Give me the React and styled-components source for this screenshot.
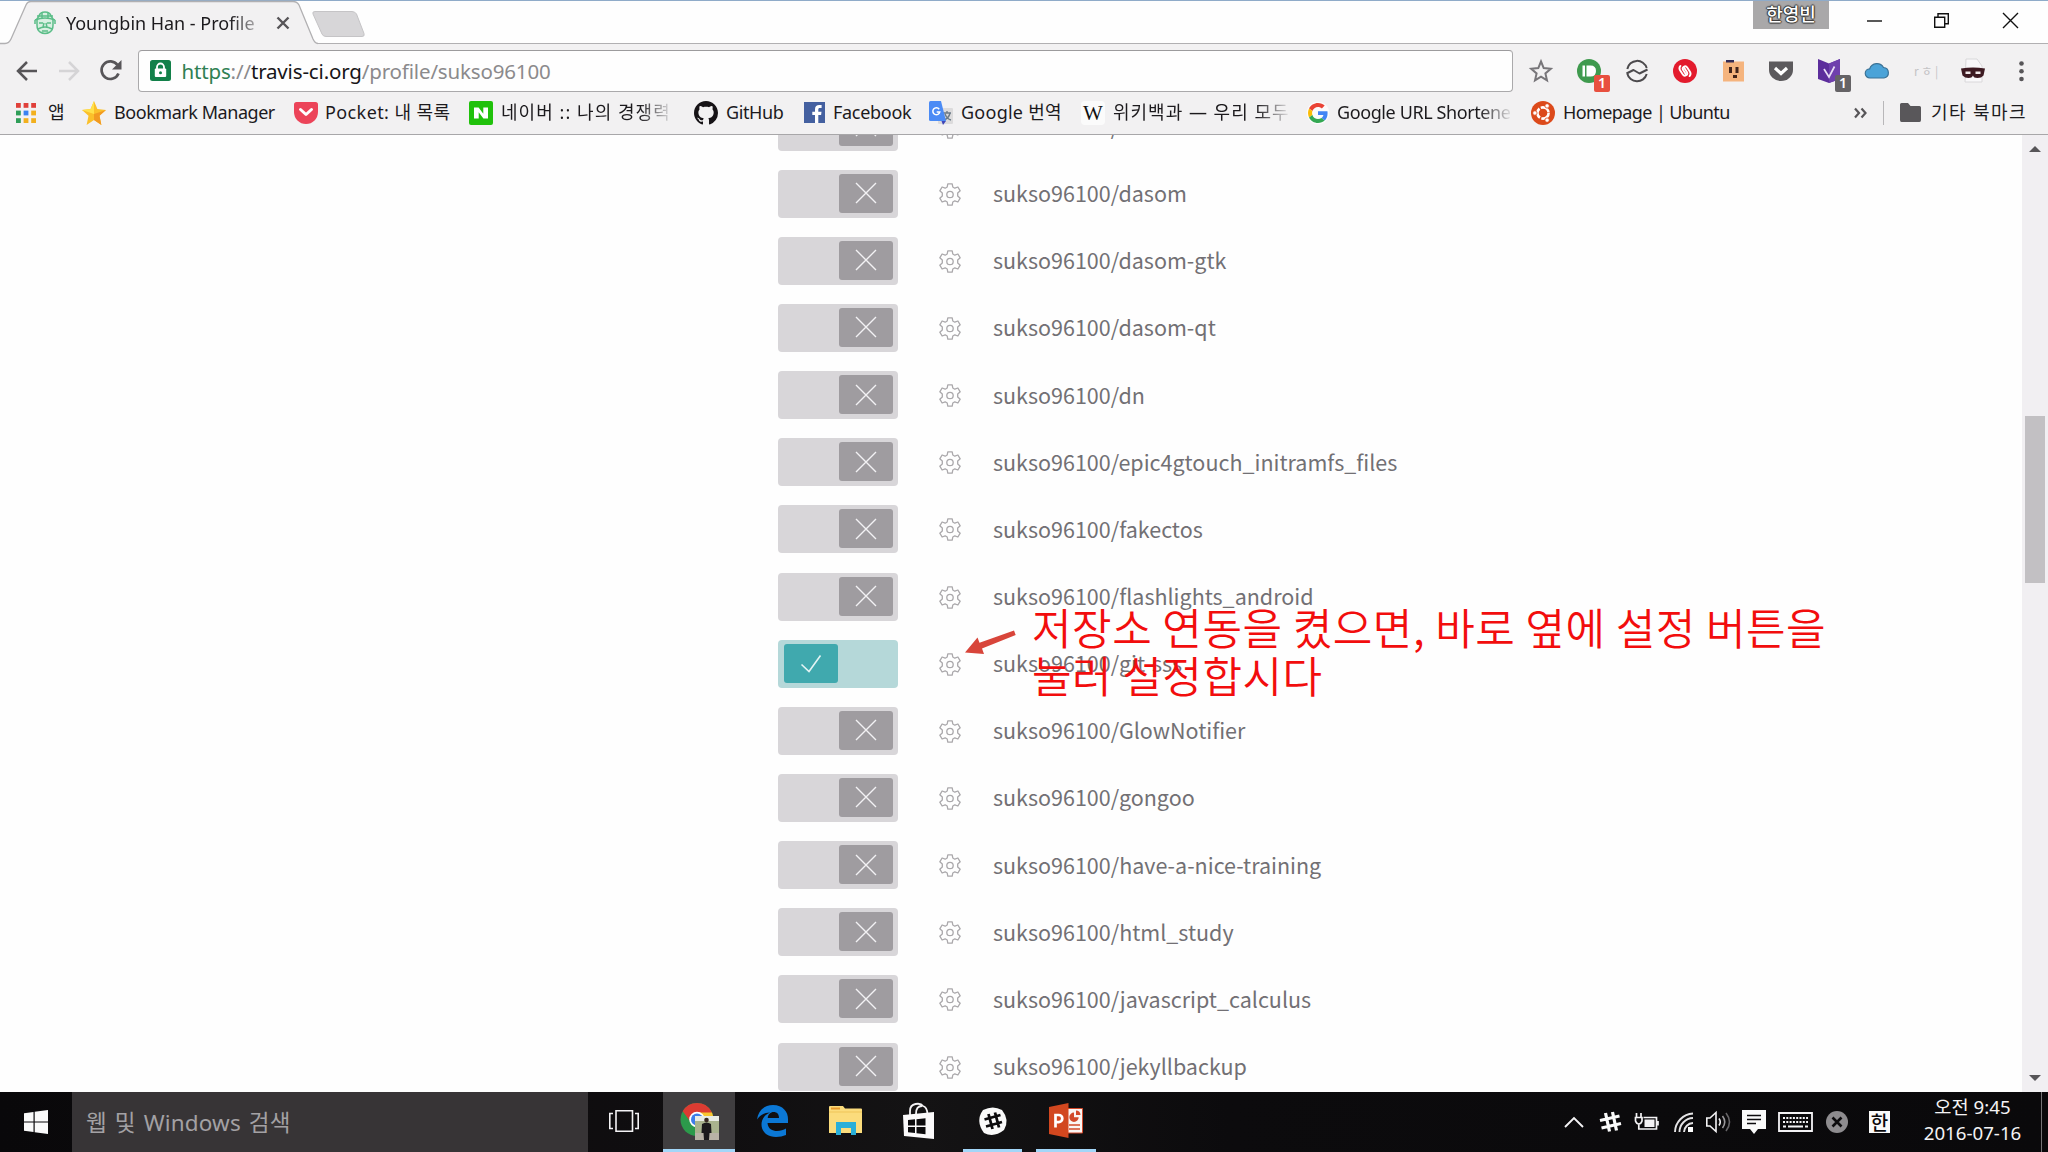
import React from "react";
import styled, { createGlobalStyle } from "styled-components";

const ui = `"Noto Sans", "Noto Sans CJK KR", sans-serif`;
const cjk = `"Noto Sans CJK KR", "Noto Sans", sans-serif`;

const Global = createGlobalStyle`
  * { box-sizing: border-box; }
  html, body { margin: 0; padding: 0; overflow: hidden; background: #fefefe; }
  svg { display: block; overflow: visible; flex: none; }
`;

const Screen = styled.div`
  width: 2048px;
  height: 1152px;
  display: flex;
  flex-direction: column;
  overflow: hidden;
  font-family: ${ui};
  color: #1c1a1d;
  background: #fefefe;
`;

/* ---------- title bar ---------- */
const TitleBar = styled.header`
  height: 44px;
  flex: none;
  display: flex;
  align-items: flex-start;
  border-top: 1px solid #8fabc9;
  background: linear-gradient(#b1b0b2, #b1b0b2) bottom / 100% 1px no-repeat, #fefefe;
`;
const Tab = styled.div`
  position: relative;
  width: 318px;
  height: 43px;
  padding-left: 34px;
  display: flex;
  align-items: center;
  flex: none;
`;
const TabShape = styled.svg`
  position: absolute;
  left: 0;
  top: 0;
`;
const Favicon = styled.div`
  position: relative;
  width: 22px;
  margin-right: 10px;
`;
const TabTitle = styled.div`
  position: relative;
  width: 195px;
  font-size: 18px;
  letter-spacing: -0.03px;
  line-height: 24px;
  white-space: nowrap;
  overflow: hidden;
  -webkit-mask-image: linear-gradient(90deg, #000 84%, rgba(0, 0, 0, 0.35) 97%);
`;
const TabClose = styled.div`
  position: relative;
  margin-left: 16px;
`;
const NewTab = styled.div`
  margin: 10px 0 0 -1px;
`;
const WindowArea = styled.div`
  margin-left: auto;
  display: flex;
  align-items: flex-start;
`;
const UserBadge = styled.div`
  width: 76px;
  height: 28px;
  background: #a9a8a9;
  color: #fff;
  font: 500 18px/25px ${cjk};
  text-align: center;
  text-shadow: 1px 0 1px #333, -1px 0 1px #333, 0 1px 1px #333, 0 -1px 1px #333;
  margin-right: 38px;
`;
const WinButton = styled.div`
  width: ${(p) => p.$w}px;
  padding-top: 12px;
`;

/* ---------- toolbar ---------- */
const Toolbar = styled.div`
  height: 50px;
  flex: none;
  display: flex;
  align-items: center;
  padding: 3px 0 0 16px;
  background: #f2f1f2;
`;
const NavIcon = styled.div`
  width: ${(p) => p.$w}px;
`;
const AddressBar = styled.div`
  width: 1375px;
  height: 42px;
  display: flex;
  align-items: center;
  padding-left: 11px;
  border: 1px solid #aaa9ab;
  border-top-color: #9c9b9d;
  border-radius: 4px;
  background: #fefefe;
`;
const Url = styled.div`
  margin-left: 10.5px;
  font-size: 20.5px;
  letter-spacing: -0.16px;
  line-height: 30px;
  white-space: nowrap;
  color: #8b8a8c;
`;
const Scheme = styled.span`
  color: #2f8053;
`;
const Host = styled.span`
  color: #171518;
`;
const Actions = styled.div`
  display: flex;
  align-items: center;
  padding-left: 16px;
`;
const Action = styled.div`
  position: relative;
  width: ${(p) => p.$w}px;
  height: 24px;
`;
const CountBadge = styled.span`
  position: absolute;
  left: 17px;
  top: 16px;
  width: 16px;
  height: 17px;
  border-radius: 2px;
  background: ${(p) => p.$bg};
  color: #fff;
  font: 600 14px/16px ${ui};
  text-align: center;
`;
const FaintText = styled.span`
  display: block;
  font: 12px/24px ${cjk};
  color: #c4c3c5;
`;

/* ---------- bookmarks ---------- */
const BookmarkBar = styled.nav`
  height: 41px;
  flex: none;
  display: flex;
  align-items: center;
  padding: 0 0 3px 16px;
  background: #f2f1f2;
  border-bottom: 1px solid #a8a7a9;
`;
const BookmarkItem = styled.div`
  width: ${(p) => p.$w}px;
  flex: none;
  display: flex;
  align-items: center;
`;
const BookmarkIcon = styled.div`
  width: ${(p) => p.$w}px;
  flex: none;
`;
const BookmarkLabel = styled.div`
  margin-bottom: 2px;
  font-size: 18px;
  line-height: 26px;
  letter-spacing: ${(p) => p.$ls}px;
  white-space: nowrap;
  ${(p) =>
    p.$clip &&
    `width: ${p.$clip}px; overflow: hidden;
     -webkit-mask-image: linear-gradient(90deg, #000 82%, rgba(0,0,0,0.1) 100%);`}
`;
const Divider = styled.div`
  width: 1px;
  height: 24px;
  margin-right: 16px;
  background: #b8b7b9;
`;

/* ---------- page ---------- */
const Page = styled.main`
  position: relative;
  height: 957px;
  flex: none;
  display: flex;
  justify-content: space-between;
  overflow: hidden;
  background: #fefefe;
`;
const RepoList = styled.ul`
  list-style: none;
  margin: -42px 0 0 778px;
  padding: 0;
`;
const RepoRow = styled.li`
  height: 67.15px;
  display: flex;
  align-items: center;
`;
const Switch = styled.div`
  width: 120px;
  height: 48px;
  display: flex;
  justify-content: ${(p) => (p.$on ? "flex-start" : "flex-end")};
  padding: ${(p) => (p.$on ? "4.5px 6px" : "4px 5.5px")};
  border-radius: 4px;
  background: ${(p) => (p.$on ? "#b5d8d9" : "#d8d6d9")};
`;
const Knob = styled.div`
  width: 54px;
  height: 39px;
  display: flex;
  align-items: center;
  justify-content: center;
  border-radius: 3px;
  background: ${(p) => (p.$on ? "#40a9ae" : "#9f9ca0")};
`;
const GearBox = styled.div`
  margin: 1px 32px 0 41px;
`;
const RepoName = styled.span`
  margin-bottom: 1px;
  font-family: ${cjk};
  font-size: 21.5px;
  line-height: 32px;
  white-space: nowrap;
  color: #727074;
`;
const Annotation = styled.p`
  position: absolute;
  left: 1032px;
  top: 467px;
  margin: 0;
  font: 350 43px/48px ${cjk};
  letter-spacing: 0.52px;
  color: #f20d0d;
  white-space: nowrap;
`;
const Arrow = styled.svg`
  position: absolute;
  left: 965px;
  top: 495px;
`;
const ScrollTrack = styled.div`
  width: 26px;
  height: 100%;
  display: flex;
  flex-direction: column;
  align-items: center;
  justify-content: space-between;
  padding: 11px 0;
  background: #f1eff2;
`;
const ScrollThumb = styled.div`
  width: 20px;
  height: 167px;
  margin-bottom: 228px;
  background: #c2c0c3;
`;

/* ---------- taskbar ---------- */
const Taskbar = styled.footer`
  height: 60px;
  flex: none;
  display: flex;
  background: linear-gradient(90deg, #09080a, #100e10 35%, #141314 45%, #0c0b0d 60%, #0a090b);
  color: #f4f3f5;
`;
const StartButton = styled.div`
  width: 72px;
  display: flex;
  align-items: center;
  padding-left: 24px;
`;
const SearchBox = styled.div`
  width: 516px;
  padding-left: 14px;
  background: #373436;
  color: #a3a1a4;
  font-size: 22.5px;
  letter-spacing: 0.15px;
  word-spacing: 2px;
  line-height: 61px;
  white-space: nowrap;
`;
const AppSlot = styled.div`
  width: ${(p) => p.$w}px;
  margin-left: ${(p) => p.$ml || 0}px;
  height: 60px;
  display: flex;
  align-items: center;
  justify-content: center;
  background: ${(p) => (p.$active ? "#403e40" : "transparent")};
  border-bottom: 3px solid ${(p) => (p.$open ? "#a3d6f8" : "transparent")};
`;
const Tray = styled.div`
  display: flex;
  align-items: center;
  margin-left: auto;
`;
const TrayIcon = styled.div`
  width: ${(p) => p.$w}px;
`;
const ImeBadge = styled.div`
  width: 21px;
  height: 22px;
  background: #fafafa;
  color: #0a090b;
  font: 500 19px/21px ${cjk};
  text-align: center;
`;
const Clock = styled.div`
  width: 151px;
  padding: 2px 0 0 14px;
  text-align: center;
  font-size: 18.7px;
  white-space: nowrap;
`;
const ClockLine = styled.div`
  height: 26px;
  line-height: 26px;
`;
const DesktopEdge = styled.div`
  width: 7px;
  height: 60px;
  border-left: 1px solid #757376;
`;

/* ---------- icons ---------- */
const Gear = () => (
  <svg width="22" height="23" viewBox="0 0 22 23" fill="none" stroke="#aaa8ab" strokeWidth="1.3" strokeLinejoin="round">
    <path d="M8.8 .8h4.4l.6 3.2 2 1.2 3.100-1.200 2.300 3.800-2.500 2.300v2.800l2.500 2.300-2.300 3.800-3.100-1.200-2 1.200-.6 3.200H8.800L8.200 19l-2-1.200L3.100 19 .8 15.200l2.500-2.300v-2.800L.8 7.800 3.100 4l3.100 1.200 2-1.200z" />
    <circle cx="11" cy="11.5" r="3.2" />
  </svg>
);
const Cross = () => (
  <svg width="20" height="20" viewBox="0 0 20 20" stroke="#f3f2f4" strokeWidth="1.4">
    <path d="M0 0L20 20M20 0L0 20" />
  </svg>
);
const Check = () => (
  <svg width="20" height="17" viewBox="0 0 20 17" stroke="#e4f4f4" strokeWidth="1.6" fill="none">
    <path d="M.5 9.500L8 16.500 19.500 .5" />
  </svg>
);
const TravisIcon = () => (
  <svg width="22" height="24" viewBox="0 0 22 24" fill="none" stroke="#5bbd88" strokeWidth="1.5">
    <path d="M5 5Q6 1 11 1t6 4l2 3v6q0 5-3 7-5 3-10 0-3-2-3-7V8z" fill="#d9f0e2" />
    <path d="M1 9q10-4 20 0M3 5h16M8 1v7M14 1v7M5 12h4M13 12h4M10 12l-1 4h4l-1-4M4 18q7-4 14 0M8 20h6M1 9v4M21 9v4" />
  </svg>
);
const UbuntuIcon = () => (
  <svg width="24" height="24" viewBox="0 0 24 24">
    <circle cx="12" cy="12" r="12" fill="#dc4a1b" />
    <circle cx="12" cy="12" r="5.600" fill="none" stroke="#fff" strokeWidth="2.600" strokeDasharray="10.300 1.430" />
    <g fill="#fff" stroke="#dc4a1b" strokeWidth=".8">
      <circle cx="3.900" cy="12" r="2.200" />
      <circle cx="16.100" cy="4.900" r="2.200" />
      <circle cx="16.100" cy="19.100" r="2.200" />
    </g>
  </svg>
);
const WikiW = styled.div`
  width: 24px;
  height: 24px;
  border-radius: 4px;
  background: #fbfbfb;
  font: 21px/24px "Liberation Serif", serif;
  color: #111;
  text-align: center;
`;
const GoogleG = () => (
  <svg width="20" height="20" viewBox="0 0 48 48">
    <circle cx="24" cy="24" r="27" fill="#fbfbfb" />
    <path fill="#EA4335" d="M24 9.500c3.540 0 6.710 1.220 9.210 3.600l6.850-6.850C35.900 2.380 30.470 0 24 0 14.620 0 6.510 5.380 2.560 13.220l7.980 6.190C12.430 13.720 17.740 9.500 24 9.500z" />
    <path fill="#4285F4" d="M46.980 24.550c0-1.570-.15-3.090-.38-4.550H24v9.020h12.940c-.58 2.960-2.260 5.480-4.780 7.180l7.730 6c4.510-4.180 7.090-10.360 7.090-17.650z" />
    <path fill="#FBBC05" d="M10.530 28.590c-.48-1.450-.76-2.990-.76-4.590s.27-3.140.76-4.590l-7.980-6.190C.92 16.460 0 20.120 0 24c0 3.880.92 7.540 2.560 10.780l7.970-6.190z" />
    <path fill="#34A853" d="M24 48c6.480 0 11.930-2.130 15.890-5.810l-7.730-6c-2.150 1.450-4.920 2.300-8.160 2.300-6.260 0-11.570-4.220-13.470-9.910l-7.980 6.190C6.510 42.620 14.620 48 24 48z" />
  </svg>
);
const AppsGrid = () => (
  <svg width="20" height="20" viewBox="0 0 20 20">
    {["#e0403a", "#e0403a", "#e0403a", "#2f9e58", "#3b82f0", "#f2b01e", "#2f9e58", "#f2b01e", "#f2b01e"].map((c, i) => (
      <rect key={i} x={(i % 3) * 7.6} y={Math.floor(i / 3) * 7.6} width="4.8" height="4.8" fill={c} />
    ))}
  </svg>
);
const StarIcon = () => (
  <svg width="24" height="24" viewBox="0 0 24 24">
    <path d="M12 0l3.400 8.100 8.600.8-6.500 5.800L19.400 24 12 19 4.600 24l1.900-9.300L0 8.900l8.600-.8z" fill="#fbc02a" />
    <path d="M12 0v13L0 8.900l8.600-.8z" fill="#ffe14a" />
    <path d="M12 13l12-4.100-6.500 5.800L19.400 24 12 19z" fill="#f29a22" />
  </svg>
);
const PocketRed = () => (
  <svg width="24" height="22" viewBox="0 0 24 22">
    <path d="M2.500 0h19Q24 0 24 2.500V10a12 12 0 0 1-24 0V2.500Q0 0 2.500 0z" fill="#ec4459" />
    <path d="M6.500 7.500l5.500 5 5.500-5" fill="none" stroke="#fff" strokeWidth="3" strokeLinecap="round" strokeLinejoin="round" />
  </svg>
);
const NaverIcon = () => (
  <svg width="24" height="24" viewBox="0 0 24 24">
    <rect width="24" height="24" rx="2" fill="#20c10b" />
    <path d="M5 6.500h4.600l4.700 6.300V6.500H19v11h-4.600l-4.700-6.300v6.300H5z" fill="#fff" />
  </svg>
);
const GithubIcon = () => (
  <svg width="24" height="24" viewBox="0 0 16 16" fill="#161316">
    <path d="M8 0C3.580 0 0 3.580 0 8c0 3.540 2.290 6.530 5.470 7.590.4.07.55-.17.55-.38 0-.19-.01-.82-.01-1.490-2.010.37-2.530-.49-2.690-.94-.09-.23-.48-.94-.82-1.130-.28-.15-.68-.52-.01-.53.63-.01 1.080.58 1.230.82.72 1.210 1.870.87 2.330.66.07-.52.28-.87.51-1.070-1.780-.2-3.640-.89-3.640-3.950 0-.87.31-1.590.82-2.150-.08-.2-.36-1.020.08-2.120 0 0 .67-.21 2.200.82.64-.18 1.320-.27 2-.27s1.360.09 2 .27c1.530-1.040 2.200-.82 2.200-.82.44 1.100.16 1.920.08 2.120.51.56.82 1.270.82 2.150 0 3.070-1.870 3.750-3.650 3.950.29.25.54.73.54 1.480 0 1.070-.01 1.930-.01 2.200 0 .21.15.46.55.38A8.010 8.010 0 0 0 16 8c0-4.420-3.580-8-8-8z" />
  </svg>
);
const FacebookIcon = () => (
  <svg width="21" height="21" viewBox="0 0 21 21">
    <rect width="21" height="21" fill="#4460a0" />
    <path d="M11 21v-8H8.300V9.800H11V7.300c0-2.800 1.700-4.200 4.200-4.200h2.400V6h-1.700c-1.300 0-1.600.6-1.600 1.600v2.200h3.200l-.4 3.200h-2.800v8z" fill="#fff" />
  </svg>
);
const TranslateIcon = () => (
  <svg width="24" height="24" viewBox="0 0 24 24">
    <rect x="9" y="7" width="15" height="16" rx="1" fill="#dcdbdc" />
    <path d="M14 12h8M18 10v2M16 13q2 5 6 6M21 12q-1 5-6 7" stroke="#6b7a86" strokeWidth="1.400" fill="none" />
    <path d="M1.500 0h10.500l5 20H1.500Q0 20 0 18.500v-17Q0 0 1.500 0z" fill="#4b8bf5" />
    <path d="M12.500 20H17l-3 4z" fill="#4046b8" />
    <path d="M10.200 8.200a3.500 3.500 0 1 0 .6 2.700H7.700" stroke="#fff" strokeWidth="1.500" fill="none" />
  </svg>
);
const FolderGrey = () => (
  <svg width="21" height="19" viewBox="0 0 21 19">
    <path d="M1.500 0h6.500l2.500 3h9q1.500 0 1.500 1.500v12.500q0 2-1.500 2h-18Q0 19 0 17V1.500Q0 0 1.500 0z" fill="#59575a" />
  </svg>
);

const bookmarks = [
  { icon: <AppsGrid />, text: "앱", w: 66, iw: 32, ls: 0 },
  { icon: <StarIcon />, text: "Bookmark Manager", w: 212, iw: 32, ls: -0.45 },
  { icon: <PocketRed />, text: "Pocket: 내 목록", w: 175, iw: 31, ls: 0.4 },
  { icon: <NaverIcon />, text: "네이버 :: 나의 경쟁력", w: 225, iw: 32, ls: 1.05, clip: 169 },
  { icon: <GithubIcon />, text: "GitHub", w: 110, iw: 32, ls: -0.4 },
  { icon: <FacebookIcon />, text: "Facebook", w: 125, iw: 29, ls: -0.3 },
  { icon: <TranslateIcon />, text: "Google 번역", w: 152, iw: 32, ls: 0.25 },
  { icon: <WikiW>W</WikiW>, text: "위키백과 — 우리 모두", w: 227, iw: 32, ls: 1, clip: 175 },
  { icon: <GoogleG />, text: "Google URL Shortener", w: 223, iw: 29, ls: -0.4, clip: 173 },
  { icon: <UbuntuIcon />, text: "Homepage | Ubuntu", w: 323, iw: 32, ls: -0.6 },
];

const repos = [
  "sukso96100/cron",
  "sukso96100/dasom",
  "sukso96100/dasom-gtk",
  "sukso96100/dasom-qt",
  "sukso96100/dn",
  "sukso96100/epic4gtouch_initramfs_files",
  "sukso96100/fakectos",
  "sukso96100/flashlights_android",
  "sukso96100/git-sss",
  "sukso96100/GlowNotifier",
  "sukso96100/gongoo",
  "sukso96100/have-a-nice-training",
  "sukso96100/html_study",
  "sukso96100/javascript_calculus",
  "sukso96100/jekyllbackup",
];
const enabledRepo = "sukso96100/git-sss";

function Repo({ name }) {
  const on = name === enabledRepo;
  return (
    <RepoRow>
      <Switch $on={on}>
        <Knob $on={on}>{on ? <Check /> : <Cross />}</Knob>
      </Switch>
      <GearBox><Gear /></GearBox>
      <RepoName>{name}</RepoName>
    </RepoRow>
  );
}

function BrowserTitle() {
  return (
    <TitleBar>
      <Tab>
        <TabShape width="318" height="43" viewBox="0 0 318 43">
          <path d="M0 42.500H5Q9 42.500 11 38L26 4Q27.500 .5 31 .5H293Q297 .5 299 4L313 38Q315 42.500 318 42.500V44H0z" fill="#f2f1f2" />
          <path d="M0 42.500H5Q9 42.500 11 38L26 4Q27.500 .5 31 .5H293Q297 .5 299 4L313 38Q315 42.500 318 42.500" fill="none" stroke="#b1b0b2" strokeWidth="1.300" />
        </TabShape>
        <Favicon><TravisIcon /></Favicon>
        <TabTitle>Youngbin Han - Profile</TabTitle>
        <TabClose>
          <svg width="12" height="12" viewBox="0 0 12 12" stroke="#575558" strokeWidth="2.400"><path d="M.5 .5l11 11M11.500 .5l-11 11" /></svg>
        </TabClose>
      </Tab>
      <NewTab>
        <svg width="50" height="26" viewBox="0 0 50 26">
          <path d="M-2 .5H35Q38 .5 39.500 3L47 22.500Q48 25.500 45 25.500H9Q6 25.500 5 23L-4 3Q-5 .5-2 .5z" fill="#d7d6d8" stroke="#c5c4c6" />
        </svg>
      </NewTab>
      <WindowArea>
        <UserBadge>한영빈</UserBadge>
        <WinButton $w={67}>
          <svg width="15" height="15" viewBox="0 0 15 15" stroke="#111" strokeWidth="1.400"><path d="M0 8h15" /></svg>
        </WinButton>
        <WinButton $w={69}>
          <svg width="15" height="15" viewBox="0 0 15 15" stroke="#111" strokeWidth="1.400" fill="none"><path d="M.7 4.200h10v10H.7zM4 4V.7h10.300v10H11" /></svg>
        </WinButton>
        <WinButton $w={45}>
          <svg width="15" height="15" viewBox="0 0 15 15" stroke="#111" strokeWidth="1.400"><path d="M0 0l15 15M15 0L0 15" /></svg>
        </WinButton>
      </WindowArea>
    </TitleBar>
  );
}

function BrowserToolbar() {
  return (
    <Toolbar>
      <NavIcon $w={43}>
        <svg width="21" height="20" viewBox="0 0 21 20" fill="none" stroke="#575558" strokeWidth="2.500"><path d="M21 10H2M11 1L2 10l9 9" /></svg>
      </NavIcon>
      <NavIcon $w={41}>
        <svg width="21" height="20" viewBox="0 0 21 20" fill="none" stroke="#d5d4d6" strokeWidth="2.500"><path d="M0 10h19M10 1l9 9-9 9" /></svg>
      </NavIcon>
      <NavIcon $w={38}>
        <svg width="22" height="21" viewBox="0 0 22 21" fill="none" stroke="#575558" strokeWidth="2.700"><path d="M18.500 13.500A8.800 8.800 0 1 1 17.500 5" /><path d="M21.500 0v9.500H12z" fill="#575558" stroke="none" /></svg>
      </NavIcon>
      <AddressBar>
        <svg width="21" height="21" viewBox="0 0 21 21">
          <rect width="21" height="21" rx="2.500" fill="#128049" />
          <path d="M7 9V7a3.500 3.500 0 0 1 7 0v2" fill="none" stroke="#fff" strokeWidth="1.800" />
          <rect x="4.800" y="8.500" width="11.400" height="8.500" rx="1" fill="#fff" />
          <circle cx="10.500" cy="12.700" r="1.500" fill="#128049" />
        </svg>
        <Url><Scheme>https</Scheme>://<Host>travis-ci.org</Host>/profile/sukso96100</Url>
      </AddressBar>
      <Actions>
        <Action $w={48}>
          <svg width="24" height="24" viewBox="0 0 24 24"><path d="M12 2.500l2.700 6.600 7.100.6-5.400 4.700 1.600 7L12 17.700l-6 3.700 1.600-7L2.200 9.700l7.100-.6z" fill="none" stroke="#78767a" strokeWidth="2" /></svg>
        </Action>
        <Action $w={49}>
          <svg width="24" height="24" viewBox="0 0 24 24"><circle cx="12" cy="12" r="12" fill="#3f9a4e" /><path d="M5.500 6.500H8v11H5.500zM9.500 6.500h4q5.500 0 5.500 5.500t-5.500 5.500h-4z" fill="#fff" /></svg>
          <CountBadge $bg="#e8503f">1</CountBadge>
        </Action>
        <Action $w={47}>
          <svg width="22" height="24" viewBox="0 0 22 24" fill="none" stroke="#4c4a4d" strokeWidth="2"><path d="M1.300 10A10 10 0 0 1 20.700 9M1.300 14.500A10 10 0 0 0 20.700 15M.5 14.500L7.500 11 13.500 14.500 21.500 10.500" strokeLinejoin="round" /></svg>
        </Action>
        <Action $w={50}>
          <svg width="24" height="24" viewBox="0 0 24 24"><circle cx="12" cy="12" r="12" fill="#e31b2d" /><g transform="rotate(12 12 12)" fill="none" stroke="#fff" strokeWidth="1.900" strokeLinecap="round"><path d="M10.300 8.800L14 12.500a2.400 2.400 0 0 1-3.400 3.400L7 12.300a3.600 3.600 0 0 1-.5-4.300" /><path d="M13.700 15.200L10 11.500a2.400 2.400 0 0 1 3.400-3.400L17 11.700a3.600 3.600 0 0 1 .5 4.300" /></g></svg>
        </Action>
        <Action $w={46}>
          <svg width="21" height="24" viewBox="0 0 21 24"><rect y="2.500" width="21" height="20" fill="#f5b47e" /><path d="M3 1h8v2.500H3z" fill="#332c55" /><path d="M6 8h3v6H6zM12.500 8h3v6h-3zM10 16h4v3h-4z" fill="#42251c" /></svg>
        </Action>
        <Action $w={49}>
          <svg width="24" height="24" viewBox="0 0 24 24"><path d="M0 2.500h24V11a12 11 0 0 1-24 0z" fill="#5c5a5d" /><path d="M6 9l6 5.500L18 9" fill="none" stroke="#fff" strokeWidth="3.200" /></svg>
        </Action>
        <Action $w={47}>
          <svg width="22" height="24" viewBox="0 0 22 24"><path d="M0 0l11 4.500L22 0v20l-11 4L0 20z" fill="#5c2d9c" /><path d="M11 4.500L22 0v20l-11 4z" fill="#6f40ad" /><path d="M6 10l5 8 5.500-10.500" fill="none" stroke="#e8def5" strokeWidth="1.700" /></svg>
          <CountBadge $bg="#656366">1</CountBadge>
        </Action>
        <Action $w={49}>
          <svg width="24" height="24" viewBox="0 0 24 24"><path d="M5 19a4.600 4.600 0 0 1-.3-9.200A7.600 7.600 0 0 1 18.500 8.500 5.300 5.300 0 0 1 19 19z" fill="#4ba3d8" stroke="#3a7296" strokeWidth="1.200" /></svg>
        </Action>
        <Action $w={47}><FaintText>r ㅎ |</FaintText></Action>
        <Action $w={58}>
          <svg width="24" height="24" viewBox="0 0 24 24"><path d="M5 0h11l5 7v16H4z" fill="#f9f8fa" stroke="#d9d8da" /><path d="M0 9.500q12-2 24 0l-1.500 7q-2 2.500-6 2.500t-4.500-2.500q-1 2.500-4.500 2.500t-6-2.500z" fill="#3d1a22" /><path d="M4.500 12.500h5v2.500h-5zM14.500 12.500h5v2.500h-5z" fill="#f2e9ea" /></svg>
        </Action>
        <Action $w={6}>
          <svg width="5" height="24" viewBox="0 0 5 24" fill="#575558"><circle cx="2.500" cy="4.500" r="2.300" /><circle cx="2.500" cy="12.300" r="2.300" /><circle cx="2.500" cy="20" r="2.300" /></svg>
        </Action>
      </Actions>
    </Toolbar>
  );
}

function Bookmarks() {
  return (
    <BookmarkBar>
      {bookmarks.map((b) => (
        <BookmarkItem key={b.text} $w={b.w}>
          <BookmarkIcon $w={b.iw}>{b.icon}</BookmarkIcon>
          <BookmarkLabel $ls={b.ls} $clip={b.clip}>{b.text}</BookmarkLabel>
        </BookmarkItem>
      ))}
      <BookmarkItem $w={29}>
        <svg width="13" height="10" viewBox="0 0 13 10" fill="none" stroke="#575558" strokeWidth="2.200"><path d="M1 .5L5 5 1 9.500M7.500 .5l4 4.500-4 4.500" /></svg>
      </BookmarkItem>
      <Divider />
      <BookmarkItem $w={140}>
        <BookmarkIcon $w={31}><FolderGrey /></BookmarkIcon>
        <BookmarkLabel $ls={1.4}>기타 북마크</BookmarkLabel>
      </BookmarkItem>
    </BookmarkBar>
  );
}

function WindowsTaskbar() {
  return (
    <Taskbar>
      <StartButton>
        <svg width="24" height="24" viewBox="0 0 24 24" fill="#fafafa"><path d="M0 3.300l9.500-1.400v9.500H0zM10.700 1.700L24 0v11.400H10.700zM0 12.600h9.500v9.500L0 20.700zM10.700 12.600H24V24l-13.300-1.800z" /></svg>
      </StartButton>
      <SearchBox>웹 및 Windows 검색</SearchBox>
      <AppSlot $w={72}>
        <svg width="30" height="22" viewBox="0 0 30 22" fill="none" stroke="#f4f3f5" strokeWidth="1.600"><path d="M7 .8h16.500v20.400H7zM4 3.500H.8v15H4M26 3.500h3.200v15H26" /></svg>
      </AppSlot>
      <AppSlot $w={72} $ml={3} $active $open>
        <svg width="36" height="38" viewBox="0 0 36 38">
          <circle cx="16" cy="17.500" r="16.500" fill="#2c9a4b" />
          <path d="M1.700 9.200A16.500 16.500 0 0 1 30.300 9.200L31 11.500H16l-7.500 7z" fill="#dc3b32" />
          <path d="M16 10.500h15a16.500 16.500 0 0 1-13 23l5-12z" fill="#f7c531" />
          <circle cx="16" cy="17.500" r="7.800" fill="#fff" /><circle cx="16" cy="17.500" r="6" fill="#3e7de8" />
          <rect x="14" y="14" width="24" height="24" fill="#a9b38e" /><path d="M14 14h24v5H14z" fill="#e8ece6" /><path d="M14 31h24v7H14z" fill="#b9b3a6" />
          <circle cx="25.500" cy="18" r="2.300" fill="#3a2a22" /><path d="M21 22q4.500-3 9 0l.5 9h-2l-.5 7h-5l-.5-7h-2z" fill="#1c1a1c" />
        </svg>
      </AppSlot>
      <AppSlot $w={74}>
        <svg width="31" height="32" viewBox="0 0 31 32"><path d="M0 14.500C1.500 5 8 0 16 0c10 0 15 7 15 14v4H10.500c.5 6 5 8 9.500 8 3.500 0 6.500-1 9-2.500v6.500q-4.500 2-10 2C10 32 4.500 26.500 4.500 19.500 4.500 14 8 9.500 13 7.500 8 7.500 3 10 0 14.500zM10.700 13H22c0-4-2-6-5.300-6s-5.600 2.500-6 6z" fill="#0b78d6" /></svg>
      </AppSlot>
      <AppSlot $w={73}>
        <svg width="33" height="29" viewBox="0 0 33 29"><path d="M0 1q0-1 1-1h13l2 2.500h16q1 0 1 1V27H0z" fill="#fbdc7c" /><path d="M0 6h33" stroke="#efc558" /><path d="M2 1.500h9v2H2z" fill="#e89b2d" /><path d="M7 16h20v13h-5v-7H12v7H7z" fill="#2aafd9" /></svg>
      </AppSlot>
      <AppSlot $w={73}>
        <svg width="32" height="36" viewBox="0 0 32 36"><path d="M7 12V8q0-6 5.500-7T20 3q4 1 4.500 8M13 11q0-8 6-8" fill="none" stroke="#f4f3f5" strokeWidth="1.800" /><path d="M0 12l31-3v27L1 33z" fill="#fbfafb" /><path d="M5 17l7-.7v6.200H5zM13.500 16.200l9-.9v7.200h-9zM5 24h7v6l-7-.7zM13.500 24h9v7.200l-9-.9z" fill="#0c0b0d" /></svg>
      </AppSlot>
      <AppSlot $w={59} $ml={8} $open>
        <svg width="28" height="28" viewBox="0 0 28 28"><path d="M4 3Q14-2 23 3q8 10 2 20-10 8-20 3Q-4 14 4 3z" fill="#fafafa" /><path d="M9.500 7l4 15M16 5.500l4 15M5.500 12.500l16-4.500M7 19.500L23 15" stroke="#0c0b0d" strokeWidth="2.800" /></svg>
      </AppSlot>
      <AppSlot $w={60} $ml={14} $open>
        <svg width="34" height="35" viewBox="0 0 34 35"><path d="M18 5.500h15.500v24.500H18z" fill="#fbf5f3" stroke="#d2492a" /><path d="M20 22h11M20 26h11" stroke="#d2492a" strokeWidth="1.600" /><path d="M25 9.500a4.700 4.700 0 1 0 4.700 4.700H25z" fill="#d2492a" /><path d="M27 7.500a4.700 4.700 0 0 1 4.500 4.500H27z" fill="#d2492a" /><path d="M0 4l19.500-4v35L0 31z" fill="#d2471f" /><path d="M6.500 24.500V12h3.200a3.300 3.300 0 0 1 0 7.200H6.500" fill="none" stroke="#fff" strokeWidth="2.700" /></svg>
      </AppSlot>
      <Tray>
        <TrayIcon $w={35}><svg width="18" height="10" viewBox="0 0 18 10" fill="none" stroke="#f4f3f5" strokeWidth="1.900"><path d="M0 10l9-9 9 9" /></svg></TrayIcon>
        <TrayIcon $w={35}><svg width="21" height="20" viewBox="0 0 21 20" stroke="#fafafa" strokeWidth="3.200"><path d="M5.500 1l4 18.500M12.500 0l4 18.500M0 8.500L19.500 4M1.500 16L21 11.500" /></svg></TrayIcon>
        <TrayIcon $w={39}><svg width="24" height="19" viewBox="0 0 24 19" fill="none" stroke="#f4f3f5" strokeWidth="1.700"><path d="M8.500 4.500h13v11.500H7.500M23 8v4.500M1.500 0v4M6 0v4M.5 4.500H7V8q-1 3-3.200 3T.5 8zM3.800 11v5H8" /><path d="M9.500 6.500h10v7.500h-10z" fill="#f4f3f5" stroke="none" /></svg></TrayIcon>
        <TrayIcon $w={32}><svg width="19" height="20" viewBox="0 0 19 20" fill="none" stroke="#e4e3e5" strokeWidth="1.900"><path d="M1 20A19 19 0 0 1 19 1.500M5.500 20A14 14 0 0 1 19 6M10 20a9.500 9.500 0 0 1 9-9" /><path d="M14 15h5v5h-5z" fill="#fff" stroke="none" /></svg></TrayIcon>
        <TrayIcon $w={36}><svg width="25" height="22" viewBox="0 0 25 22" fill="none" stroke="#f4f3f5" strokeWidth="1.600"><path d="M.8 7H4l6-5.500v19L4 15H.8z" /><path d="M13 7.500q2.500 3.500 0 7" /><path d="M16.500 5q4.500 6 0 12" stroke="#9b999c" /><path d="M20 2q7 9 0 18" stroke="#666467" /></svg></TrayIcon>
        <TrayIcon $w={36}><svg width="24" height="24" viewBox="0 0 24 24"><path d="M0 0h24v19h-8l-4 5-4-5H0z" fill="#fafafa" /><path d="M5 5.500h14M5 9.500h14M5 13.500h9" stroke="#0c0b0d" strokeWidth="1.600" /></svg></TrayIcon>
        <TrayIcon $w={48}><svg width="35" height="20" viewBox="0 0 35 20" fill="none" stroke="#f4f3f5"><path d="M1 1h33v18H1z" strokeWidth="1.800" /><path d="M5 6h25M5 10h25" strokeWidth="2" strokeDasharray="2 1.300" /><path d="M5 14.500h3M10 14.500h15M27 14.500h3" strokeWidth="2" /></svg></TrayIcon>
        <TrayIcon $w={43}><svg width="22" height="22" viewBox="0 0 22 22"><circle cx="11" cy="11" r="11" fill="#8e8c8f" /><path d="M6.500 6.500l9 9M15.500 6.500l-9 9" stroke="#0c0b0d" strokeWidth="2.600" /></svg></TrayIcon>
        <ImeBadge>한</ImeBadge>
      </Tray>
      <Clock>
        <ClockLine>오전 9:45</ClockLine>
        <ClockLine>2016-07-16</ClockLine>
      </Clock>
      <DesktopEdge />
    </Taskbar>
  );
}

export default function App() {
  return (
    <Screen>
      <Global />
      <BrowserTitle />
      <BrowserToolbar />
      <Bookmarks />
      <Page>
        <RepoList>
          {repos.map((r) => <Repo key={r} name={r} />)}
        </RepoList>
        <ScrollTrack>
          <svg width="12" height="6" viewBox="0 0 12 6" fill="#575558"><path d="M0 6l6-6 6 6z" /></svg>
          <ScrollThumb />
          <svg width="12" height="6" viewBox="0 0 12 6" fill="#575558"><path d="M0 0l6 6 6-6z" /></svg>
        </ScrollTrack>
        <Arrow width="51" height="25" viewBox="0 0 51 25" fill="#d8453a">
          <path d="M0 22.500L12.500 7.500l2 5.200L49 .5l1.700 4.500L17 18.500l2 5.500z" />
        </Arrow>
        <Annotation>
          저장소 연동을 켰으면, 바로 옆에 설정 버튼을<br />눌러 설정합시다
        </Annotation>
      </Page>
      <WindowsTaskbar />
    </Screen>
  );
}
